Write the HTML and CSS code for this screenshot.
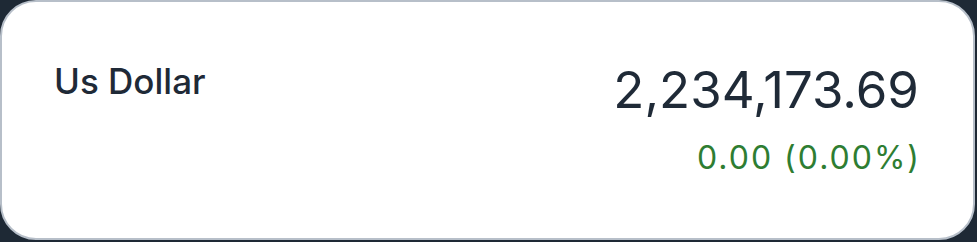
FILE: index.html
```html
<!DOCTYPE html>
<html lang="en">
<head>
    <meta charset="UTF-8">
    <meta name="viewport" content="width=device-width, initial-scale=1.0">
    <title>Currency</title>
    <link rel="stylesheet" href="styles.css">
</head>
<body>

<div class="currency-card">
    <div class="currency-name">Us Dollar</div>
    <div class="currency-values">
        <div class="currency-amount">2,234,173.69</div>
        <div class="currency-change">0.00 (0.00%)</div>
    </div>
</div>

</body>
</html>
```

FILE: styles.css
```css
* {
    margin: 0;
    padding: 0;
    box-sizing: border-box;
    font-family: Inter, "Noto Sans", sans-serif;
}
body {
    background: #1e2935;
    width: 977px;
    height: 242px;
    overflow: hidden;
}
.currency-card {
    width: 975px;
    height: 240px;
    background: #fff;
    border: 2px solid #b7bfc9;
    border-radius: 36px;
    padding: 57px 54px 0 52px;
    display: flex;
    justify-content: space-between;
    align-items: flex-start;
    color: #1f2a37;
}
.currency-name {
    font-size: 35px;
    font-weight: 500;
    line-height: 44px;
}
.currency-values {
    display: flex;
    flex-direction: column;
    align-items: flex-end;
}
.currency-amount {
    font-size: 51px;
    line-height: 62px;
}
.currency-change {
    font-size: 32px;
    line-height: 40px;
    letter-spacing: 2px;
    margin-top: 17px;
    margin-right: -2px;
    color: #2e7d32;
}
```
